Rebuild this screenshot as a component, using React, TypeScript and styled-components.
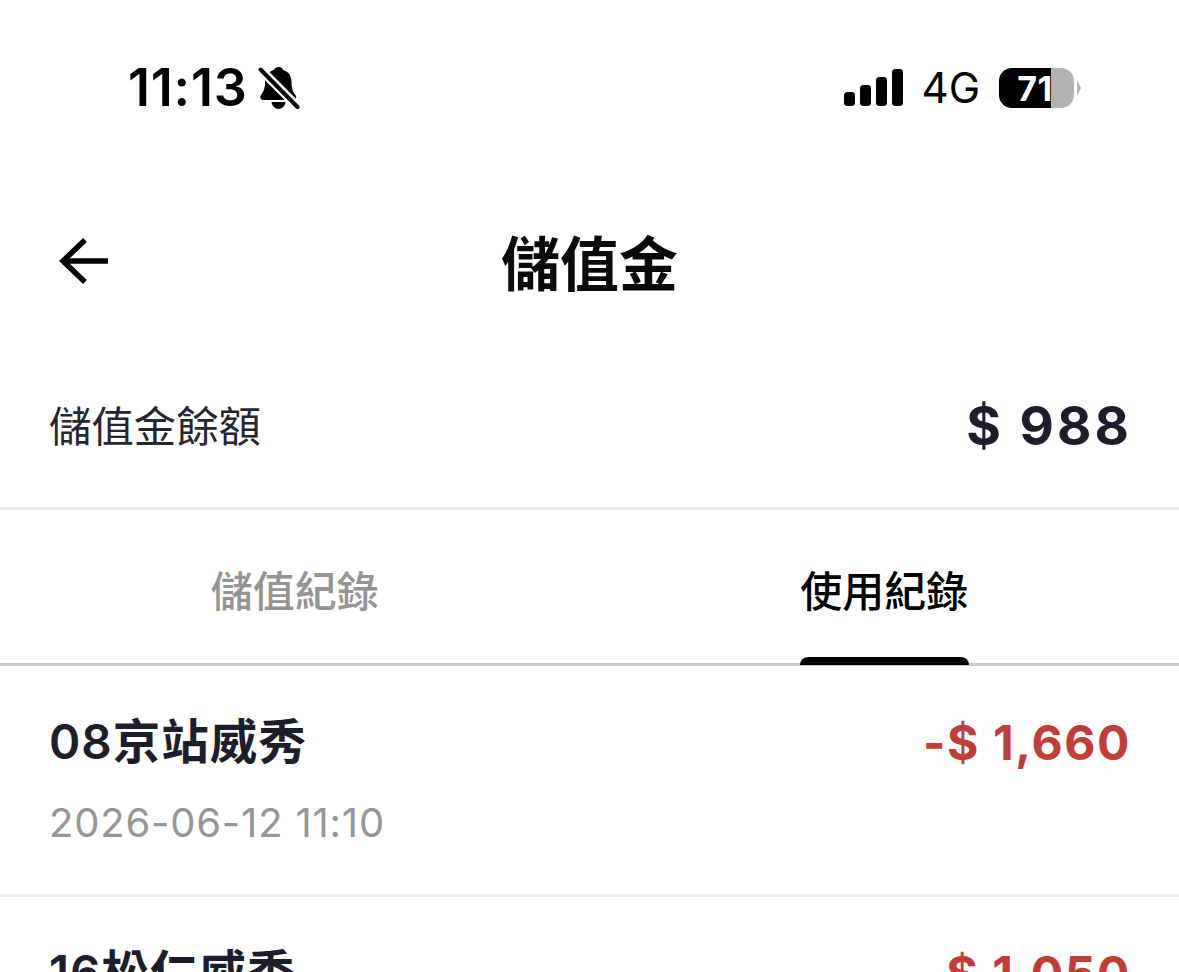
import React from "react";
import styled, { createGlobalStyle } from "styled-components";

const Global = createGlobalStyle`
  html, body { margin: 0; padding: 0; background: #fff; }
  body { font-family: Inter, "Noto Sans CJK TC", sans-serif; overflow: hidden; }
  #root { height: 972px; overflow: hidden; }
`;

const Page = styled.div`
  width: 1179px;
  background: #fff;
  display: flex;
  flex-direction: column;
`;

const StatusBar = styled.div`
  height: 176px;
  box-sizing: border-box;
  display: flex;
  align-items: center;
  justify-content: space-between;
  padding: 0 98px 0 128px;
`;

const StatusGroup = styled.div<{ $gap: number }>`
  display: flex;
  align-items: center;
  gap: ${(p) => p.$gap}px;
`;

const Clock = styled.span`
  font-family: Inter, sans-serif;
  font-size: 52px;
  font-weight: 600;
  letter-spacing: 0.8px;
  color: #000;
  line-height: 1;
`;

const Network = styled.span`
  font-family: Inter, sans-serif;
  font-size: 42px;
  font-weight: 400;
  color: #000;
  line-height: 1;
`;

const Battery = styled.div`
  position: relative;
  width: 82px;
  height: 40px;
  display: flex;
`;

const BatteryFill = styled.div`
  width: 53px;
  height: 40px;
  background: #000;
  border-radius: 13px 0 0 13px;
`;

const BatteryRest = styled.div`
  width: 23px;
  height: 40px;
  background: #b2b2b2;
  border-radius: 0 13px 13px 0;
`;

const BatteryLabel = styled.span`
  position: absolute;
  left: 0;
  top: 0;
  width: 72px;
  text-align: center;
  font-family: Inter, sans-serif;
  font-size: 34px;
  font-weight: 700;
  letter-spacing: 0.5px;
  line-height: 41px;
  color: #fff;
`;

const BatteryTip = styled.div`
  width: 0;
  height: 0;
  margin: 12px 0 0 3px;
  border-top: 8px solid transparent;
  border-bottom: 8px solid transparent;
  border-left: 4px solid #b2b2b2;
`;

const NavBar = styled.header`
  height: 176px;
  box-sizing: border-box;
  padding-bottom: 8px;
  position: relative;
  display: flex;
  align-items: center;
  justify-content: center;
`;

const BackButton = styled.div`
  position: absolute;
  left: 58px;
  top: 59px;
  width: 52px;
  height: 52px;
`;

const Title = styled.h1`
  margin: 0;
  font-family: "Noto Sans CJK TC", sans-serif;
  font-size: 59px;
  font-weight: 700;
  color: #0a0a0a;
  line-height: 1;
`;

const BalanceRow = styled.section`
  height: 158px;
  box-sizing: border-box;
  padding: 0 50px 8px 49px;
  display: flex;
  align-items: center;
  justify-content: space-between;
  border-bottom: 3px solid #ececee;
`;

const BalanceLabel = styled.span`
  font-family: "Noto Sans CJK TC", sans-serif;
  font-size: 42.4px;
  font-weight: 400;
  color: #26262e;
  margin-bottom: 4px;
`;

const BalanceValue = styled.span`
  font-family: Inter, sans-serif;
  font-size: 53px;
  font-weight: 700;
  letter-spacing: 3px;
  margin-right: -3px;
  color: #1e1e2a;
`;

const Tabs = styled.nav`
  height: 156px;
  box-sizing: border-box;
  display: grid;
  grid-template-columns: 1fr 1fr;
  border-bottom: 3px solid #c8c8d2;
`;

const Tab = styled.div<{ $active?: boolean }>`
  position: relative;
  display: flex;
  align-items: center;
  justify-content: center;
  padding-top: 4px;
  font-family: "Noto Sans CJK TC", sans-serif;
  font-size: 42px;
  font-weight: 500;
  color: ${(p) => (p.$active ? "#000" : "#949494")};
`;

const TabMark = styled.span`
  position: absolute;
  left: 50%;
  bottom: -2px;
  margin-left: -84px;
  width: 169px;
  height: 8px;
  background: #000;
  border-radius: 8px 8px 0 0;
`;

const Record = styled.article`
  height: 231px;
  box-sizing: border-box;
  padding: 47px 50px 0 49px;
  border-bottom: 3px solid #ececee;
`;

const RecordTop = styled.div`
  display: flex;
  align-items: center;
  justify-content: space-between;
  height: 58px;
`;

const RecordName = styled.span`
  font-family: Inter, "Noto Sans CJK TC", sans-serif;
  font-size: 47.5px;
  font-weight: 600;
  letter-spacing: 1px;
  margin-bottom: 8px;
  color: #1e1e2a;
`;

const RecordAmount = styled.span`
  font-family: Inter, sans-serif;
  font-size: 48px;
  font-weight: 700;
  letter-spacing: 1.6px;
  margin-right: -2px;
  color: #c23c38;
`;

const RecordDate = styled.div`
  margin-top: 29px;
  font-family: Inter, sans-serif;
  font-size: 40px;
  font-weight: 400;
  letter-spacing: 0.8px;
  color: #969696;
  line-height: 46px;
`;

const Signal = () => (
  <svg width="59" height="38" viewBox="0 0 59 38" fill="#000">
    <rect x="0" y="23" width="11" height="14" rx="3.5" />
    <rect x="16" y="16" width="11" height="21" rx="3.5" />
    <rect x="32" y="8" width="11" height="29" rx="3.5" />
    <rect x="48" y="0" width="11" height="37" rx="3.5" />
  </svg>
);

const BellOff = () => (
  <svg width="42" height="44" viewBox="0 0 42 44">
    <path
      fill="#000"
      d="M20.500 1c2.500 0 4 1.300 4.500 3C31 5.500 33.500 10.500 33.500 16c0 6 1.200 9.800 4 13 1.400 1.700 .6 5-2 5H5c-2.600 0-3.400-3.300-2-5 2.800-3.200 4-7 4-13C7 10.500 10 5.500 16 4c.5-1.700 2-3 4.500-3z"
    />
    <path fill="#000" d="M13.500 36h14c-.5 4-3.500 7-7 7s-6.500-3-7-7z" />
    <path d="M0 1 L41 42" stroke="#fff" strokeWidth="9" />
    <path d="M2.500 3.500 L39.500 41" stroke="#000" strokeWidth="4" strokeLinecap="round" />
  </svg>
);

const BackArrow = () => (
  <svg width="52" height="52" viewBox="0 0 52 52" fill="none" stroke="#000" strokeWidth="5.500">
    <path d="M50 26H6" />
    <path d="M27 5 L5 26 L27 47" />
  </svg>
);

export default function App() {
  return (
    <Page>
      <Global />
      <StatusBar>
        <StatusGroup $gap={10}>
          <Clock>11:13</Clock>
          <BellOff />
        </StatusGroup>
        <StatusGroup $gap={19}>
          <Signal />
          <Network>4G</Network>
          <Battery>
            <BatteryFill />
            <BatteryRest />
            <BatteryTip />
            <BatteryLabel>71</BatteryLabel>
          </Battery>
        </StatusGroup>
      </StatusBar>
      <NavBar>
        <BackButton>
          <BackArrow />
        </BackButton>
        <Title>儲值金</Title>
      </NavBar>
      <BalanceRow>
        <BalanceLabel>儲值金餘額</BalanceLabel>
        <BalanceValue>$ 988</BalanceValue>
      </BalanceRow>
      <Tabs>
        <Tab>儲值紀錄</Tab>
        <Tab $active>
          使用紀錄
          <TabMark />
        </Tab>
      </Tabs>
      <Record>
        <RecordTop>
          <RecordName>08京站威秀</RecordName>
          <RecordAmount>-$ 1,660</RecordAmount>
        </RecordTop>
        <RecordDate>2026-06-12 11:10</RecordDate>
      </Record>
      <Record>
        <RecordTop>
          <RecordName>16松仁威秀</RecordName>
          <RecordAmount>-$ 1,050</RecordAmount>
        </RecordTop>
        <RecordDate>2026-06-12 11:08</RecordDate>
      </Record>
    </Page>
  );
}
